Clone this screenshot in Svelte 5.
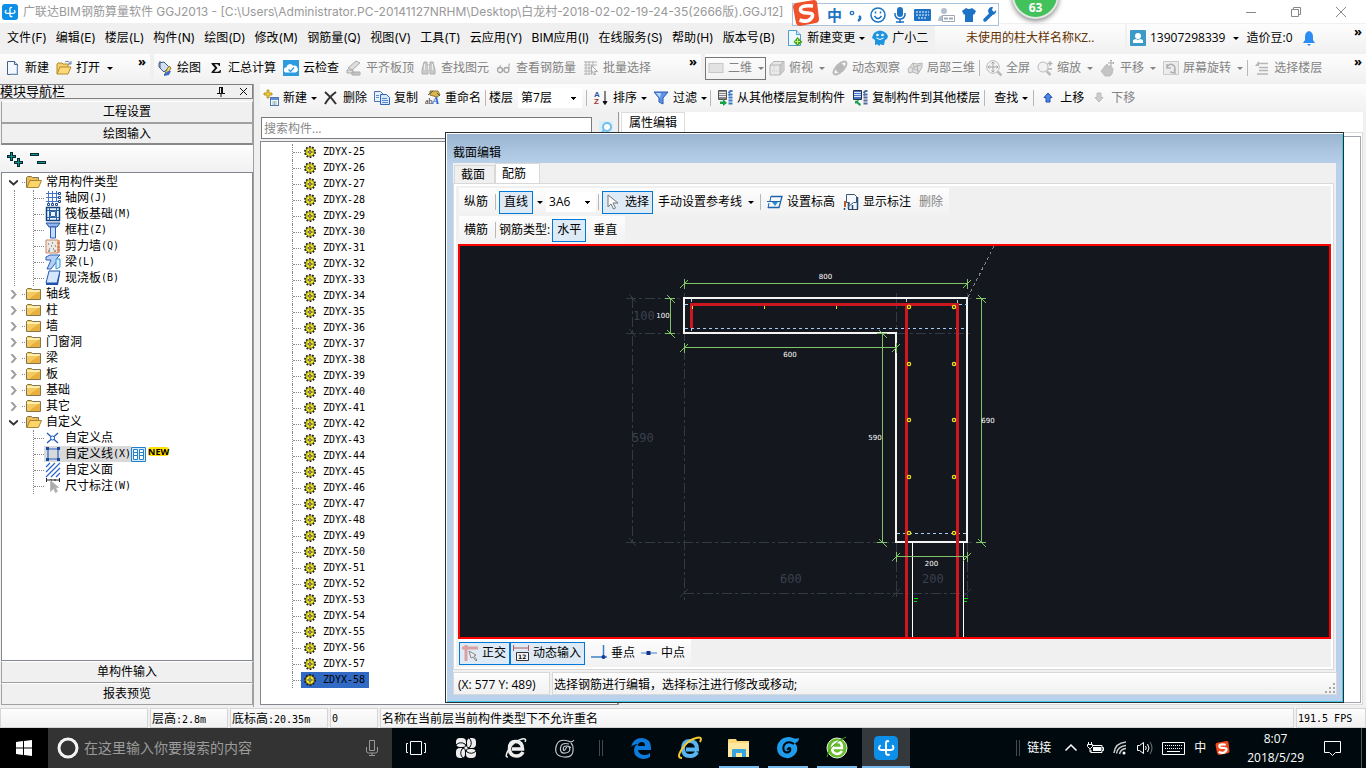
<script lang="ts">
  type Tool = { icon?: string; label: string; caret?: boolean; off?: boolean; sep?: boolean };

  const icons: Record<string, string> = {
    app: '<rect width="16" height="16" rx="3" fill="#0d8fe8"/><path d="M9.500 3.500Q8 3 8 5v6q0 2 2 1.500M4 6.500Q2 9 5 9.300h6q3-.3 1.500-2.800" fill="none" stroke="#fff" stroke-width="1.300" stroke-linecap="round"/>',
    page: '<path d="M2.500 1.500h7l3 3v10h-10z" fill="#f4f9ff" stroke="#44618c"/><path d="M9.500 1.500v3h3" fill="#cde" stroke="#44618c"/><path d="M12 6v8H5" fill="none" stroke="#9db8d8"/>',
    open: '<path d="M1 14V4l1-1h4l1 1h5v3" fill="#f5cf6b" stroke="#b58a2e"/><path d="M1 14l3-7h11l-3 7z" fill="#ffd978" stroke="#b58a2e"/><path d="M9 2q4-2 5 2M12 4h3V1" fill="none" stroke="#5a7da8"/>',
    bucket: '<path d="M2 3l5-1 5 5-5 5-5-5z" fill="#cfe0f4" stroke="#3e5f95"/><path d="M3 1v7" stroke="#556"/><path d="M12 6l2 2-3 5-3 1 1-3z" fill="#f2d66a" stroke="#8d7426"/><path d="M7 14q3-2 4-3l3 0-2 4-5 1z" fill="#3c6fc9"/>',
    sum: '<path d="M3.500 3h8.500v3h-1Q10.500 4.300 9 4.300H6.500L9.500 8 6 11.800H9.500q2 0 2.500-1.800h1L12.500 13H3.500v-1l3.500-4-3.500-4z" fill="#111"/>',
    cloud: '<rect width="16" height="16" fill="#2d9be0"/><path d="M3.500 12.500a2.600 2.600 0 010-5.200 3.500 3.500 0 016.500-1.500 3.500 3.500 0 012.500 6.700z" fill="#fff"/><path d="M5.500 9.500l2 2 3.500-4" fill="none" stroke="#2d9be0" stroke-width="1.300"/>',
    slab: '<path d="M2 8l8-7 4 2-8 7zM1 10h6v3H1zM6 12h8v3H6z" fill="#ddd" stroke="#aaa"/><path d="M8 12v3M10 12v3M12 12v3" stroke="#aaa"/>',
    binoc: '<path d="M3 2h3v3h3V2h3l2 8v4H9v-4H7v4H1v-4z" fill="#c9c9c9" stroke="#b0b0b0"/><path d="M7.500 5v5M3.500 4v6M11.500 4v6" stroke="#eee"/>',
    glasses: '<circle cx="4" cy="10" r="2.500" fill="none" stroke="#a5a5a5" stroke-width="1.300"/><circle cx="10.500" cy="10" r="2.500" fill="none" stroke="#a5a5a5" stroke-width="1.300"/><path d="M2 9l3-4M13 9V4h1M6.500 10h2" stroke="#a5a5a5" fill="none"/>',
    batch: '<path d="M1 2h13M1 5h13M1 8h8M1 11h8M1 14h8M3 1v14M6 1v14M10 1v6" stroke="#b5b5b5" fill="none"/><path d="M8.500 5.500l6 6-3 0 1 3-2 0-1-3-1 2z" fill="#f4f4f4" stroke="#aaa"/>',
    flat: '<rect x="1" y="3.500" width="14" height="9" fill="#e2e2e2" stroke="#c8c8c8"/>',
    cube: '<path d="M1 5l4-3.500h10V11l-4 4H1z" fill="#e9e9e9" stroke="#b5b5b5"/><path d="M11 5l4-3v9l-4 4z" fill="#ccc"/><path d="M1 5h10v10M11 5l4-3.500" fill="none" stroke="#b5b5b5"/><path d="M5 2v9H1M5 11h6" fill="none" stroke="#ccc" stroke-dasharray="1 1"/>',
    orbit: '<circle cx="8" cy="8" r="4.500" fill="#b8b8b8"/><ellipse cx="8" cy="8" rx="8.500" ry="3.500" transform="rotate(-45 8 8)" fill="none" stroke="#bbb" stroke-width="2"/>',
    local3d: '<path d="M1 9l5-6 4 1 5-1v4l-4 7-5-2-4 1z" fill="#e2e2e2" stroke="#b5b5b5"/><path d="M6 3l1 4 7-2M7 7l-2 5M10 5l1 8M3 7l9 4" fill="none" stroke="#b5b5b5"/>',
    full: '<circle cx="7" cy="7" r="6.300" fill="#f2f2f2" stroke="#bbb"/><path d="M7 2v10M2 7h10M5.500 3.500L7 2l1.500 1.500M5.500 10.500L7 12l1.500-1.500M3.500 5.500L2 7l1.500 1.500M10.500 5.500L12 7l-1.500 1.500" fill="none" stroke="#a5a5a5"/><path d="M11.500 11.500l4 4" stroke="#bbb" stroke-width="2.500"/>',
    zoom: '<circle cx="6" cy="7" r="5" fill="#f2f2f2" stroke="#bbb"/><path d="M9.500 11l4 4" stroke="#bbb" stroke-width="2.500"/><path d="M13 1v5M10.500 3.500h5M11 9h4" stroke="#b0b0b0" stroke-width="1.300"/>',
    pan: '<path d="M3 9l2-3 2-2 1 2 3 0 2 3-1 5-2 2H5l-4-5z" fill="#c4c4c4" stroke="#bbb"/><path d="M11 0v6M8 3h6M10 1l1-1 1 1M13 2l1 1-1 1" stroke="#aaa" fill="none"/>',
    rotate: '<path d="M.5 1.500h15v13H.500z" fill="#ececec" stroke="#cacaca"/><path d="M4 8a4 4 0 117 3M4 4v4h4M7 12l5 1v-5" fill="none" stroke="#b0b0b0" stroke-width="1.500"/>',
    floors: '<path d="M3 3.500h11M5 7.500h9M5 10.500h9M3 14h11" stroke="#b5b5b5" stroke-width="1.500"/><path d="M1 6l4-5v5z" fill="#b5b5b5"/>',
    newitem: '<path d="M4 0h2v3h3v2H6v3H4V5H1V3h3z" fill="#f6cf32" stroke="#a07c12" stroke-width=".7"/><rect x="7.500" y="7.500" width="8" height="8" fill="#f4f9ff" stroke="#5276ad"/><path d="M8 9h7" stroke="#5e92d8" stroke-width="2"/><path d="M9 12h5M9 14h5M11.500 11v4" stroke="#9bb"/>',
    cross: '<path d="M2 2q7 6 11 12M13 2Q6 7 2 14" fill="none" stroke="#333" stroke-width="2"/>',
    copy: '<path d="M.5 1.500h6l3 3v7h-9z" fill="#e8f1fc" stroke="#4a72b0"/><path d="M6.500 4.500h6l3 3v7h-9z" fill="#d8e8fb" stroke="#3465b5"/><path d="M8 8.500h5M8 10.500h6M8 12.500h6M2 5.500h3M2 7.500h3" stroke="#5e8bcd"/>',
    rename: '<path d="M5 1h8l2 4-3 2-7-2z" fill="#dcb64a" stroke="#8b7636"/><path d="M3 5l5-4M12 3l3 3" stroke="#555"/><text x="0" y="14" font-size="8" font-family="Liberation Serif" fill="#222">ab</text><text x="7" y="14" font-size="11" font-weight="700" font-style="italic" font-family="Liberation Serif" fill="#2b62c8">A</text>',
    sort: '<text x="1" y="7" font-size="8" font-weight="700" font-family="Liberation Sans" fill="#2f55a5">A</text><text x="1" y="14" font-size="8" font-weight="700" font-family="Liberation Sans" fill="#a03434">Z</text><path d="M12 1v13M10 11.500l2 3 2-3z" stroke="#111" fill="#111"/>',
    filter: '<path d="M1 2h14l-5 6v6l-4-2V8z" fill="#5d93e8" stroke="#2c5cb5"/><path d="M3 3h5l-1 5" fill="#b8d4fa"/>',
    fromfloor: '<path d="M1.500.500h8v9h-8z" fill="#888" stroke="#555"/><path d="M2 2.500h7M2 4.500h7M2 6.500h7" stroke="#eee"/><path d="M15.500 1h-2l-2 2M15.500 4.500h-3l-1 1M15.500 7.500h-4M15.500 10.500h-4M15.500 13.500h-4" stroke="#3a78c4" stroke-width="2" fill="none"/><path d="M3 11.500h3V9l4 4-4 3v-2H3z" fill="#18a048"/>',
    tofloor: '<path d="M1.500.500h8v9h-8z" fill="#4a72c8" stroke="#234"/><path d="M2 2.500h7M2 4.500h7M2 6.500h7" stroke="#dde8ff"/><path d="M15.500 1h-2l-2 2M15.500 4.500h-3l-1 1M15.500 7.500h-4M15.500 10.500h-4M15.500 13.500h-4" stroke="#4a6d9c" stroke-width="2" fill="none"/><path d="M3 11l4-1-1 2 3 2-1 2-4-3-1 1z" fill="#18a048"/>',
    up: '<path d="M8 3l4 4.500h-2v4.500h-4V7.500H4z" fill="#4d86e8" stroke="#2450a8"/>',
    down: '<path d="M8 12l4-4.500h-2V3h-4v4.500H4z" fill="#ccc" stroke="#bbb"/>',
    change: '<path d="M1.500.500h8l4 4v11h-12z" fill="#eef8ff" stroke="#4a9ed0"/><path d="M9.500.500v4h4" fill="#cfe9f8" stroke="#4a9ed0"/><path d="M10.500 7l5 5-5 4-4-4z" fill="#4da32a"/><path d="M10.500 9v5M8 11.500h5" stroke="#b8f070"/>',
    robot: '<path d="M2 3q6-5 12 0l2 3-1 3-2 1-1 5h-2l-1-1-2 2-2-2-1 1H3l0-5-3-2 1-3z" fill="#1f95e0"/><circle cx="5.500" cy="5" r="1.300" fill="#fff"/><circle cx="10.500" cy="5" r="1.300" fill="#fff"/><path d="M4.500 8q3.500 3 7 0" stroke="#fff" fill="none"/>',
    user: '<rect width="16" height="16" rx="1" fill="#3a9bc8"/><circle cx="8" cy="6" r="3" fill="#fff"/><path d="M3 13v-3l3-1 2 1 2-1 3 1v3z" fill="#fff"/>',
    bell: '<path d="M8 1q4 1 4 6v3l2 3H2l2-3V7q0-5 4-6z" fill="#2a8cf5"/><path d="M6 14h4l-2 2z" fill="#2a8cf5"/>',
    folder: '<path d="M.5 13.500v-10l1-1h4l1 1h8v10z" fill="#f4ca60" stroke="#86744a"/><path d="M1 4h13v2H1z" fill="#fff0b0"/><path d="M14 5v8H3z" fill="#df9f28" opacity=".6"/>',
    folderopen: '<path d="M.5 13.500v-10l1-1h4l1 1h6v3" fill="#e9bc55" stroke="#86744a"/><path d="M1 13.500l3-7h11.500l-3 7z" fill="#fbd56a" stroke="#a88434"/>',
    grid: '<path d="M3.500 1v13M7.500 1v13M11.500 1v11M1 3.500h12M1 7.500h12M1 11.500h12" stroke="#4674c8"/><path d="M13.500 2.500h2v2h-2zM13.500 6.500h2v2h-2zM13.500 10.500h2v2h-2zM2.500 13.500h2v2h-2zM6.500 13.500h2v2h-2zM10.500 13.500h2v2h-2z" fill="#fff" stroke="#1d4894"/>',
    raft: '<path d="M1.500 1.500h13v13h-13z" fill="#eef4ff" stroke="#14427e" stroke-width="1.500"/><path d="M5.500 5.500h5v5h-5zM4.500 2v12M11.500 2v12M2 4.500h12M2 11.500h12" fill="none" stroke="#2a64a4"/>',
    column: '<path d="M1 1h14l-3 4H4z" fill="#8fb4ee" stroke="#204f96"/><path d="M5.500 5h5v11h-5z" fill="#c6dbfb" stroke="#2a5db4"/>',
    wall: '<path d="M1 2h12v13H1z" fill="#ece8e4" stroke="#d0855c"/><path d="M3 6h1M6 8h1M4 11h1M8 11h1M3 13h2M9 13h2M7 5h1M10 8h1" stroke="#555"/><path d="M14 2v13M12 5h3M12 9h3M12 12h3" stroke="#d06a2c"/>',
    beam: '<path d="M1 3l4-2h10l-3 3v3L6 15H2l4-9H1z" fill="#b5d0f4" stroke="#2a62b5"/><path d="M11 5h4v8l-4 2z" fill="#dcebff" stroke="#2a9bd5"/>',
    cast: '<path d="M4 1h11l-3 12H1z" fill="#d5e6ff" stroke="#2457ac"/><path d="M1 13h11l3-12v3l-2 11H1z" fill="#1e52ae"/>',
    point: '<path d="M2 3l11 10M13 3L2 13" stroke="#2257a8" stroke-width="1.200"/><circle cx="7.500" cy="8" r="2" fill="#fff" stroke="#1d5fd0"/>',
    line: '<path d="M3 3h10v10H3z" fill="none" stroke="#2c64c8" stroke-width="1.200"/><path d="M1 1h3v3H1zM12 1h3v3h-3zM1 12h3v3H1zM12 12h3v3h-3z" fill="#184d9e"/>',
    area: '<path d="M1 5l4-4M1 10l9-9M1 15L15 1M6 15l9-9M11 15l4-4" stroke="#2c64c8" stroke-width="1.200"/>',
    measure: '<path d="M1.500 0v4M14.500 0v4M1 2h14M6 1v2M10 1v2" stroke="#222"/><path d="M5.500 2.500v11l3-3 2 4 2-1-2-4h3z" fill="#aaa" stroke="#bbb"/>',
    gear: '<circle cx="8" cy="8" r="5.800" fill="none" stroke="#1c1c08" stroke-width="2" stroke-dasharray="2 1.640"/><circle cx="8" cy="8" r="4.900" fill="#f6ea28" stroke="#4a4608" stroke-width=".8"/><path d="M8 4v2M8 10v2M4 8h2M10 8h2" stroke="#777010"/><circle cx="8" cy="8" r="1.500" fill="#fff" stroke="#222"/>',
    cursor: '<path d="M3 1v12l3-3 2.500 5 2-1L8 9h5z" fill="#fafafa" stroke="#777"/>',
    level: '<path d="M4 2.500h11l-3 11H1" fill="none" stroke="#1c65ac" stroke-width="1.300"/><path d="M0 7.500h13" stroke="#1c65ac"/><path d="M5 8h6l-3 4z" fill="#2b8ad8"/><path d="M4 2L3 7M2 9L1 14" stroke="#1c65ac"/>',
    note: '<path d="M1 7h2v6H1z" fill="#c3572c"/><path d="M1.500 14v2M5.500 15V8M14.500 15V3M9.500 15v-4" stroke="#1d4f8b" stroke-width="1.500"/><path d="M3.500.500h8l2 2v6h-3l-5 4 1-4h-3z" fill="#f5f9fd" stroke="#3a5676"/><path d="M5 15.500h10" stroke="#345"/>',
    ortho: '<path d="M0 3h16M4 0v16" stroke="#dca0a0" stroke-width="3"/><path d="M7 6l7 4-2 1 3 4-1 1-3-4-2 1z" fill="#eee" stroke="#888"/>',
    dyn: '<path d="M.5 0v6M15.500 0v6M0 3h16" stroke="#b25a5a"/><path d="M3.500 7.500h12v8h-12z" fill="#f4f4f4" stroke="#333"/><text x="5" y="14" font-size="6" font-weight="700" font-family="DejaVu Sans" fill="#111">12</text>',
    perp: '<path d="M0 12h16M12.500 0v12" stroke="#3d80c8" stroke-width="1.500"/><circle cx="12.500" cy="12" r="2" fill="#123c94"/>',
    mid: '<path d="M0 8h16" stroke="#3d80c8"/><path d="M5.500 6h4v4h-4z" fill="#12308c"/>'
  };

  const menus = [
    '文件(F)', '编辑(E)', '楼层(L)', '构件(N)', '绘图(D)', '修改(M)', '钢筋量(Q)', '视图(V)',
    '工具(T)', '云应用(Y)', 'BIM应用(I)', '在线服务(S)', '帮助(H)', '版本号(B)'
  ];

  const fileTools: Tool[] = [
    { icon: 'page', label: '新建' },
    { icon: 'open', label: '打开', caret: true }
  ];

  const drawTools: Tool[] = [
    { icon: 'bucket', label: '绘图' },
    { icon: 'sum', label: '汇总计算' },
    { icon: 'cloud', label: '云检查' },
    { icon: 'slab', label: '平齐板顶', off: true },
    { icon: 'binoc', label: '查找图元', off: true },
    { icon: 'glasses', label: '查看钢筋量', off: true },
    { icon: 'batch', label: '批量选择', off: true }
  ];

  const viewTools: Tool[] = [
    { icon: 'cube', label: '俯视', caret: true, off: true },
    { icon: 'orbit', label: '动态观察', off: true },
    { icon: 'local3d', label: '局部三维', off: true, sep: true },
    { icon: 'full', label: '全屏', off: true },
    { icon: 'zoom', label: '缩放', caret: true, off: true },
    { icon: 'pan', label: '平移', caret: true, off: true },
    { icon: 'rotate', label: '屏幕旋转', caret: true, off: true, sep: true },
    { icon: 'floors', label: '选择楼层', off: true }
  ];

  const editTools: Tool[] = [
    { icon: 'newitem', label: '新建', caret: true },
    { icon: 'cross', label: '删除' },
    { icon: 'copy', label: '复制' },
    { icon: 'rename', label: '重命名', sep: true }
  ];

  const listTools: Tool[] = [
    { icon: 'sort', label: '排序', caret: true },
    { icon: 'filter', label: '过滤', caret: true, sep: true },
    { icon: 'fromfloor', label: '从其他楼层复制构件' },
    { icon: 'tofloor', label: '复制构件到其他楼层', sep: true },
    { label: '查找', caret: true, sep: true },
    { icon: 'up', label: '上移' },
    { icon: 'down', label: '下移', off: true }
  ];

  const tree = [
    {
      label: '常用构件类型', open: true, items: [
        { icon: 'grid', label: '轴网', key: '(J)' },
        { icon: 'raft', label: '筏板基础', key: '(M)' },
        { icon: 'column', label: '框柱', key: '(Z)' },
        { icon: 'wall', label: '剪力墙', key: '(Q)' },
        { icon: 'beam', label: '梁', key: '(L)' },
        { icon: 'cast', label: '现浇板', key: '(B)' }
      ]
    },
    ...['轴线', '柱', '墙', '门窗洞', '梁', '板', '基础', '其它'].map((label) => ({ label, open: false, items: [] })),
    {
      label: '自定义', open: true, items: [
        { icon: 'point', label: '自定义点', key: '' },
        { icon: 'line', label: '自定义线', key: '(X)' },
        { icon: 'area', label: '自定义面', key: '' },
        { icon: 'measure', label: '尺寸标注', key: '(W)' }
      ]
    }
  ];

  const members = Array.from({ length: 34 }, (_, i) => `ZDYX-${i + 25}`);
  let selected = $state('ZDYX-58');
  let floor = $state('第7层');
  let rebar = $state('3A6');

  // section drawing, canvas pixels
  const hDims = [
    { x1: 224, x2: 507, y: 37, text: '800', ty: 33 },
    { x1: 224, x2: 436, y: 101, text: '600', ty: 111 },
    { x1: 436, x2: 507, y: 310, text: '200', ty: 320 }
  ];
  const vDims = [
    { x: 210, y1: 52, y2: 87, text: '100', tx: 203, ty: 72 },
    { x: 422, y1: 87, y2: 296, text: '590', tx: 415, ty: 194 },
    { x: 521, y1: 52, y2: 296, text: '690', tx: 528, ty: 177 }
  ];
  const bars = [61, 118, 174, 231, 287];
</script>

{#snippet icon(name: string)}
  <svg class="icon" viewBox="0 0 16 16" aria-hidden="true">{@html icons[name]}</svg>
{/snippet}

{#snippet tools(list: Tool[])}
  {#each list as t}
    <button class="tool" class:bare={!t.icon} disabled={t.off}>
      {#if t.icon}{@render icon(t.icon)}{/if}
      <span>{t.label}</span>
      {#if t.caret}<i class="caret"></i>{/if}
    </button>
    {#if t.sep}<span class="sep"></span>{/if}
  {/each}
{/snippet}

<div class="app">
  <header class="titlebar">
    {@render icon('app')}
    <h1>广联达BIM钢筋算量软件 GGJ2013 - [C:\Users\Administrator.PC-20141127NRHM\Desktop\白龙村-2018-02-02-19-24-35(2666版).GGJ12]</h1>
    <div class="win-buttons">
      <button aria-label="最小化"><svg width="12" height="12" viewBox="0 0 12 12"><path d="M1 6.500h10" /></svg></button>
      <button aria-label="还原"><svg width="12" height="12" viewBox="0 0 12 12"><path d="M1.500 3.500h7v7h-7zM3.500 3V1.500h7v7H9" /></svg></button>
      <button aria-label="关闭"><svg width="12" height="12" viewBox="0 0 12 12"><path d="M1 1l10 10M11 1L1 11" /></svg></button>
    </div>
  </header>

  <div class="ime">
    <svg class="sogou" width="28" height="28" viewBox="0 0 28 28"><path d="M4 4L22 1q2 0 3 2l2 17q0 3-3 4L8 27q-3 0-4-3L1 8q0-3 3-4z" fill="#f0502a" /><path d="M21 7Q9 6 8.500 10t7 4 4 5-12 2" fill="none" stroke="#fff" stroke-width="3.500" /></svg>
    <span>中</span>
    <svg width="14" height="16" viewBox="0 0 14 16"><circle cx="3" cy="6" r="1.700" fill="none" stroke="#1c72c4" stroke-width="1.300" /><path d="M10 9q3 2-1 5" fill="none" stroke="#1c72c4" stroke-width="2.500" /></svg>
    <svg width="16" height="16" viewBox="0 0 16 16"><circle cx="8" cy="8" r="7" fill="none" stroke="#1c72c4" stroke-width="1.500" /><path d="M4.500 9q3.500 5 7 0" fill="none" stroke="#1c72c4" stroke-width="1.500" /><path d="M5.500 4.500v2M10.500 4.500v2" stroke="#1c72c4" stroke-width="1.500" /></svg>
    <svg width="14" height="16" viewBox="0 0 14 16"><rect x="4" y="0" width="6" height="10" rx="3" fill="#1c72c4" /><path d="M2 6v2q1 4 5 4t5-4V6M7 12v4M3 15h8" fill="none" stroke="#1c72c4" stroke-width="1.500" /></svg>
    <svg width="17" height="12" viewBox="0 0 17 12"><rect width="17" height="12" rx="1" fill="#1c72c4" /><path d="M2 3h13M2 6h13M4 9h9" stroke="#fff" stroke-dasharray="2 1" /></svg>
    <svg width="17" height="16" viewBox="0 0 17 16"><circle cx="6" cy="4" r="3" fill="#b4bfcd" /><path d="M0 14q0-6 6-6t5 6z" fill="#b4bfcd" /><path d="M4.500 8.500h12v6h-12z" fill="#fff" stroke="#9da9b8" /><path d="M6 11.500h4M11 11.500h4" stroke="#9da9b8" stroke-width="2" /></svg>
    <svg width="14" height="14" viewBox="0 0 14 14"><path d="M4 0q3 2 6 0l4 3-2 4-1-1v8H3V6L2 7 0 3z" fill="#1c72c4" /></svg>
    <svg width="15" height="15" viewBox="0 0 15 15"><path d="M2 13l6-6" stroke="#1c72c4" stroke-width="3.500" stroke-linecap="round" /><path d="M13 3a4 4 0 11-3-3L9 3l2 2z" fill="#1c72c4" /></svg>
  </div>
  <div class="ball">63</div>

  <nav class="menubar">
    <div class="menus">
      {#each menus as m}<button>{m}</button>{/each}
    </div>
    {@render tools([{ icon: 'change', label: '新建变更', caret: true }, { icon: 'robot', label: '广小二' }])}
    <div class="group notice"><a href="#tip">未使用的柱大样名称KZ..</a></div>
    <div class="group account">
      {@render tools([{ icon: 'user', label: '13907298339', caret: true }])}
      <span class="beans">造价豆:0</span>
      {@render icon('bell')}
      <button class="more">»</button>
    </div>
  </nav>

  <div class="toolbar">
    <div class="group files">{@render tools(fileTools)}<button class="more">»</button></div>
    <div class="group draw">{@render tools(drawTools)}<button class="more">»</button></div>
    <div class="group views">
      <button class="tool mode" disabled>{@render icon('flat')}<span>二维</span><i class="caret"></i></button>
      {@render tools(viewTools)}
      <button class="more">»</button>
    </div>
  </div>

  <main>
    <aside>
      <div class="pane-title">
        <span>模块导航栏</span>
        <svg width="8" height="10" viewBox="0 0 8 10"><path d="M2.500 0v6M0 6.500h8M4 7v3M2 .5h4" stroke="#111" fill="none" /><path d="M5 0v6" stroke="#111" stroke-width="2" /></svg>
        <svg width="9" height="9" viewBox="0 0 9 9"><path d="M1 1l7 7M8 1L1 8" stroke="#111" /></svg>
      </div>
      <button class="pane-btn">工程设置</button>
      <button class="pane-btn active">绘图输入</button>
      <div class="tree-tools">
        <svg width="40" height="16" viewBox="0 0 40 16"><path d="M4.500 1v9M0 5.500h9M11.500 7v9M7 11.500h9M23 3.500h9M30 11.500h9" stroke="#032c2c" stroke-width="3" /><path d="M4.500 2v7M1 5.500h7M11.500 8v7M8 11.500h7M24 3.500h7M31 11.500h7" stroke="#109090" /></svg>
      </div>
      <div class="tree">
        {#each tree as node}
          <div class="node">
            <svg class="twist" class:open={node.open} width="9" height="9" viewBox="0 0 9 9"><path d="M2.500 0l4 4.500-4 4.500" /></svg>
            <i class="dots"></i>
            {@render icon(node.open ? 'folderopen' : 'folder')}
            <span>{node.label}</span>
          </div>
          {#if node.items.length}
            <div class="branch">
              <div class="kids">
                {#each node.items as item}
                  <div class="leaf">
                    <i class="dots"></i>
                    <span class="leaf-body" class:current={item.key === '(X)'}>
                      {@render icon(item.icon)}
                      <span class="leaf-label">{item.label}<span class="mono">{item.key}</span></span>
                    </span>
                    {#if item.key === '(X)'}
                      <svg width="15" height="15" viewBox="0 0 15 15"><path d="M.5.500h14v14H.500z" fill="#d6edff" stroke="#2380c8" /><path d="M2.500 2.500h4v10h-4zM8.500 2.500h4v10h-4z" fill="#fff" stroke="#2380c8" /><path d="M3 5.500h3M3 8.500h3M9 5.500h3M9 8.500h3" stroke="#2380c8" /></svg>
                      <b class="new">NEW</b>
                    {/if}
                  </div>
                {/each}
              </div>
            </div>
          {/if}
        {/each}
      </div>
      <button class="pane-btn">单构件输入</button>
      <button class="pane-btn">报表预览</button>
    </aside>

    <section class="work">
      <div class="group edit-bar">
        {@render tools(editTools)}
        <label for="floor">楼层</label>
        <select id="floor" class="combo" bind:value={floor}><option>第7层</option></select>
        <span class="sep"></span>
        {@render tools(listTools)}
      </div>
      <div class="split">
        <div class="members">
          <div class="search">
            <input type="text" aria-label="搜索构件" placeholder="搜索构件..." />
            <button aria-label="搜索"><svg width="14" height="14" viewBox="0 0 14 14"><rect width="14" height="14" fill="#d8eefb" /><circle cx="8" cy="6" r="4" fill="#fff" stroke="#6fbdec" stroke-width="2" /><path d="M5 9l-3 4" stroke="#6fbdec" stroke-width="2" /></svg></button>
          </div>
          <ul>
            {#each members as m}
              <li>
                <i class="dots"></i>
                <button class="member mono" class:selected={selected === m} onclick={() => (selected = m)}>
                  {@render icon('gear')}{m}
                </button>
              </li>
            {/each}
          </ul>
        </div>
        <div class="props">
          <button class="props-tab">属性编辑</button>
          <div class="props-page"><div></div></div>
        </div>
      </div>
    </section>
  </main>

  <div class="dialog" role="dialog" aria-label="截面编辑">
    <h2>截面编辑</h2>
    <div class="dialog-body">
      <div class="tabs">
        <button>截面</button>
        <button class="on">配筋</button>
      </div>
      <div class="page">
        <div class="group row">
          <button class="plain">纵筋</button>
          <span class="sep"></span>
          <button class="plain pressed">直线</button>
          <i class="caret"></i>
          <select class="combo small" aria-label="钢筋" bind:value={rebar}><option>3A6</option></select>
          <span class="sep"></span>
          <button class="tool pressed">{@render icon('cursor')}<span>选择</span></button>
          {@render tools([
            { label: '手动设置参考线', caret: true, sep: true },
            { icon: 'level', label: '设置标高' },
            { icon: 'note', label: '显示标注' },
            { label: '删除', off: true }
          ])}
        </div>
        <div class="group row">
          <button class="plain">横筋</button>
          <span class="sep"></span>
          <span>钢筋类型:</span>
          <button class="plain pressed">水平</button>
          <button class="plain">垂直</button>
        </div>

        <div class="canvas">
          <svg width="100%" height="100%">
            <g fill="none" stroke="#333a46" stroke-dasharray="10 3 3 3">
              <path d="M172.500 52v244M224.500 47v307M436.500 47v39M436.500 297v57M507.500 47v5M507.500 297v57" />
              <path d="M166 52.500h58M507 52.500h5M166 87.500h58M437 87.500h75M166 296.500h346M224 347.500h283" />
            </g>
            <g stroke="#333a46">
              {#each [52, 87, 296] as y}<path d="M169 {y - 4}l7 8" />{/each}
              {#each [224, 436, 507] as x}<path d="M{x - 4} 351l8 -8" />{/each}
            </g>
            <path d="M508 51L534 0" stroke="#888" stroke-dasharray="3 3" />
            <g class="ghost">
              <text x="173" y="74">100</text>
              <text x="172" y="196">590</text>
              <text x="320" y="337">600</text>
              <text x="462" y="337">200</text>
            </g>
            <path d="M224 52H507V296H436V87H224Z" fill="none" stroke="#f4f4f4" stroke-width="2" />
            <path d="M225 82.500h282M225 58.500h5M499 58.500h8M437 287.500h70M231.500 53v5M231.500 82v4M446.500 53v5M497.500 54v4" stroke="#a8cdf4" stroke-dasharray="3 3" fill="none" />
            <path d="M452.500 297v94M503.500 297v94" stroke="#fff" />
            <path d="M231.500 82V58.500H497.500V392M446.500 58V392" fill="none" stroke="#cc1720" stroke-width="3" />
            <g fill="#14171e" stroke="#f2dc1e" stroke-width="1.300">
              {#each bars as y}
                <circle cx="449" cy={y} r="1.600" />
                <circle cx="494" cy={y} r="1.600" />
              {/each}
            </g>
            <path d="M232.500 60v3M304.500 60v3M376.500 60v3" stroke="#f2dc1e" />
            <path d="M454 352.500h4M454 355.500h3M504 352.500h4M504 355.500h3" stroke="#00e000" />
            <g stroke="#7fc468">
              {#each hDims as d}
                <path d="M{d.x1} {d.y + 0.5}H{d.x2}M{d.x1 + 0.5} {d.y - 4}v10M{d.x2 + 0.5} {d.y - 4}v10M{d.x1 - 4} {d.y + 5}l8 -8M{d.x2 - 4} {d.y + 5}l8 -8" />
              {/each}
              {#each vDims as d}
                <path d="M{d.x + 0.5} {d.y1}V{d.y2}M{d.x - 5} {d.y1 + 0.5}h10M{d.x - 5} {d.y2 + 0.5}h10M{d.x - 3} {d.y1 - 3}l8 8M{d.x - 3} {d.y2 - 3}l8 8" />
              {/each}
            </g>
            <g class="dim">
              {#each hDims as d}<text x={(d.x1 + d.x2) / 2} y={d.ty}>{d.text}</text>{/each}
              {#each vDims as d}<text x={d.tx} y={d.ty}>{d.text}</text>{/each}
            </g>
          </svg>
        </div>

        <div class="group row snaps">
          <button class="tool pressed">{@render icon('ortho')}<span>正交</span></button>
          <button class="tool pressed">{@render icon('dyn')}<span>动态输入</span></button>
          <button class="tool first">{@render icon('perp')}<span>垂点</span></button>
          <button class="tool">{@render icon('mid')}<span>中点</span></button>
        </div>
      </div>
      <div class="dialog-status">
        <span class="coords">(X: 577 Y: 489)</span>
        <span class="hint">选择钢筋进行编辑，选择标注进行修改或移动;</span>
        <svg width="12" height="12" viewBox="0 0 12 12"><path d="M9 1h2M5 5h2M9 5h2M1 9h2M5 9h2M9 9h2" stroke="#aaa" stroke-width="2" /></svg>
      </div>
    </div>
  </div>

  <footer class="status">
    <span class="s-blank"></span>
    <span class="s-height">层高<span class="mono">:2.8m</span></span>
    <span class="s-base">底标高<span class="mono">:20.35m</span></span>
    <span class="s-count mono">0</span>
    <span class="s-msg">名称在当前层当前构件类型下不允许重名</span>
    <span class="s-fps mono">191.5 FPS</span>
  </footer>

  <div class="taskbar">
    <button class="start" aria-label="开始"><svg width="16" height="16" viewBox="0 0 16 16"><path d="M0 2l7-1v6.500H0zM8 1l8-1v7.500H8zM0 8.500h7V15l-7-1zM8 8.500h8V16l-8-1z" fill="#fff" /></svg></button>
    <div class="cortana">
      <svg width="22" height="22" viewBox="0 0 22 22"><circle cx="11" cy="11" r="9" fill="none" stroke="#f4f4f4" stroke-width="3" /></svg>
      <input type="text" aria-label="搜索" placeholder="在这里输入你要搜索的内容" />
      <svg width="12" height="18" viewBox="0 0 12 18"><path d="M3.500 1.500h5v10h-5zM.5 8v4q0 2 2 2h7q2 0 2-2V8M6 14v3M3 16.500h6" fill="none" stroke="#9a9a9a" /></svg>
    </div>
    <div class="apps">
      <button aria-label="任务视图"><svg width="22" height="16" viewBox="0 0 22 16"><path d="M5.500 1.500h11v13h-11zM3 3.500H1.500v9H3M19 3.500h1.500v9H19" fill="none" stroke="#fff" /></svg></button>
      <button class="wide" aria-label="四叶"><svg width="22" height="22" viewBox="0 0 22 22"><g fill="#eee"><rect x="1" y="1" width="10" height="9" rx="4" /><rect x="12" y="1" width="9" height="10" rx="4" /><rect x="11" y="12" width="10" height="9" rx="4" /><rect x="1" y="11" width="9" height="10" rx="4" /><circle cx="11" cy="11" r="2" /></g><path d="M1 8q4-4 9-1 1 1 1 3M14 1q4 4 1 9-1 1-3 1M21 14q-4 4-9 1-1-1-1-3M8 21q-4-4-1-9 1-1 3-1" fill="none" stroke="#000a0e" /></svg></button>
      <button class="wide" aria-label="浏览器"><svg width="22" height="22" viewBox="0 0 22 22"><path d="M18 15q-2 4-6.500 4-7 0-7-7.500T11 4.500t6.500 7.500H7" fill="none" stroke="#eee" stroke-width="3.500" /><path d="M3 20Q-1 20 4 12T17 2q5-1 3 3" fill="none" stroke="#eee" stroke-width="1.500" /></svg></button>
      <button aria-label="广联达"><svg width="20" height="20" viewBox="0 0 20 20"><path d="M19 2q-2 3-6 1Q3 0 1 9t8 10 9-9q0-3-2-5M14 6Q6 4 5.500 10t5 5 4-5-4 1q-1 2-2 1-1-4 3-4 4 0 4 2" fill="none" stroke="#c4c9cb" stroke-width="1.200" /></svg></button>
      <span class="bars"></span>
      <button aria-label="Edge"><svg width="22" height="22" viewBox="0 0 22 22"><path d="M1 10Q3 1 12 1q9 1 9 9v3H8q1 5 7 5 3 0 5-2v4q-3 2-7 2-9-1-9-9 0-4 4-6-6 1-7 3zM8 9h7q0-4-3-4-4 0-4 4z" fill="#0c7bdc" /></svg></button>
      <button aria-label="IE"><svg width="24" height="24" viewBox="0 0 24 24"><path d="M19 16q-2 4-7 4-7 0-7-7.500T12 5t7 8.500H8" fill="none" stroke="#58b4ee" stroke-width="4" /><path d="M4 22Q-2 22 4 13T18 2q7-2 4 4" fill="none" stroke="#f4c82e" stroke-width="2" /></svg></button>
      <button class="run" aria-label="资源管理器"><svg width="22" height="20" viewBox="0 0 22 20"><path d="M0 2q0-1 1-1h7l1 2h12v16H0z" fill="#fbd97a" /><path d="M0 5h21v14H0z" fill="#ffe8a0" /><path d="M4 12q0-1 1-1h12q1 0 1 1v7h-4v-4H8v4H4z" fill="#38a5dd" /></svg></button>
      <button class="run" aria-label="GGJ"><svg width="24" height="24" viewBox="0 0 24 24"><path d="M23 2q0 4-4 5 4 5 1 10-4 6-10 5Q1 20 1 12 2 2 12 1q3 0 5 1t6 0z" fill="#1f9cec" /><path d="M18 8q-4-3-8-1-4 3-2 8 3 3 6 0 1-3-1-3l-2 2" fill="none" stroke="#000a0e" stroke-width="2" /></svg></button>
      <button class="run" aria-label="360"><svg width="22" height="24" viewBox="0 0 22 24"><circle cx="11" cy="12" r="10" fill="#66bd2c" stroke="#e5f2d8" /><path d="M16 15q-2 3-5 3-5-1-5-6t5-6 5 6H7" fill="none" stroke="#fff" stroke-width="2.500" /><path d="M1 21Q3 9 20 1" fill="none" stroke="#3d9a18" /></svg></button>
      <button class="run now" aria-label="钢筋算量"><svg width="24" height="24" viewBox="0 0 16 16">{@html icons.app}</svg></button>
    </div>
    <div class="tray">
      <span class="bars"></span>
      <span class="links">链接</span>
      <svg width="14" height="10" viewBox="0 0 14 10"><path d="M1.500 7.500L7 2l5.500 5.500" fill="none" stroke="#fff" stroke-width="1.500" /></svg>
      <svg width="17" height="14" viewBox="0 0 17 14"><path d="M6 4.500h9v7H4V9M15 6.500h1.500v3H15M1.500 1v2M4.500 1v2M.5 3.500h5v2l-2 2h-1l-2-2zM3 7v4h1" fill="none" stroke="#fff" /><path d="M6 6h8v4H6z" fill="#fff" /></svg>
      <svg width="14" height="14" viewBox="0 0 14 14"><path d="M1 12Q2 2 13 1M3.500 12.500q1-7 9.500-8M6.500 13q1-5 6.500-5.500" fill="none" stroke="#ccc" stroke-width="1.500" /><circle cx="11" cy="12" r="1.500" fill="#fff" /></svg>
      <svg width="17" height="14" viewBox="0 0 17 14"><path d="M1.500 4.500h2l4-3v11l-4-3h-2z" fill="none" stroke="#fff" /><path d="M9.500 5q1.500 2 0 4M11.500 3q3 4 0 8" fill="none" stroke="#fff" /><path d="M14 1q4 6 0 12" fill="none" stroke="#777" /></svg>
      <svg width="23" height="13" viewBox="0 0 23 13"><path d="M.5.500h22v12H.500z" fill="none" stroke="#fff" /><path d="M3 3.500h17M3 6.500h17" stroke="#fff" stroke-dasharray="1 1" /><path d="M5 9.500h13" stroke="#fff" /></svg>
      <span>中</span>
      <svg width="15" height="16" viewBox="0 0 28 28"><path d="M4 4L22 1q2 0 3 2l2 17q0 3-3 4L8 27q-3 0-4-3L1 8q0-3 3-4z" fill="#f04a1c" /><path d="M20 8Q9 6 8 10t8 4 4 6-13 1" fill="none" stroke="#fff" stroke-width="4" /></svg>
      <time>8:07<br />2018/5/29</time>
      <svg class="bubble" width="17" height="17" viewBox="0 0 17 17"><path d="M.5 1.500h16v11h-5l-3 3-3-3h-5z" fill="none" stroke="#fff" /></svg>
      <span class="peek"></span>
    </div>
  </div>
</div>

<style>
  :global(body) {
    background: #f0f0f0;
  }

  .app {
    position: relative;
    display: flex;
    flex-direction: column;
    min-height: 100vh;
    overflow: hidden;
    background: #f0f0f0;
    color: #000;
    font: 12px/16px "Open Sans", "Noto Sans CJK SC", sans-serif;
    white-space: nowrap;
  }

  button,
  input,
  select {
    margin: 0;
    padding: 0;
    border: 0;
    border-radius: 0;
    background: none;
    color: inherit;
    font: inherit;
  }

  svg {
    flex: none;
    display: block;
  }

  .icon {
    width: 16px;
    height: 16px;
    overflow: visible;
  }

  .mono {
    font-family: "DejaVu Sans Mono", monospace;
    font-size: 10px;
  }

  .caret {
    flex: none;
    width: 0;
    border: 3px solid transparent;
    border-top-color: currentColor;
    border-bottom: 0;
  }

  .sep {
    flex: none;
    width: 1px;
    height: 16px;
    margin: 0 3px 0 0;
    background: #b8b8b8;
  }

  .group {
    display: flex;
    align-items: center;
    background: linear-gradient(#fdfdfd, #f1f1f1);
  }

  .tool {
    display: flex;
    align-items: center;
    gap: 4px;
    padding: 0 4px 0 3px;
    height: 24px;
  }

  .tool:disabled {
    color: #838383;
  }

  .more {
    align-self: flex-start;
    margin-left: auto;
    padding: 0 4px;
    font-size: 13px;
    line-height: 14px;
    font-weight: 700;
  }

  .combo {
    appearance: none;
    width: 64px;
    height: 20px;
    padding: 0 3px;
    background:
      linear-gradient(#000, #000) calc(100% - 6px) 9px / 5px 1px no-repeat,
      linear-gradient(#000, #000) calc(100% - 7px) 10px / 3px 1px no-repeat,
      linear-gradient(#000, #000) calc(100% - 8px) 11px / 1px 1px no-repeat,
      #fff;
  }

  .combo.small {
    width: 50px;
  }

  /* title bar */
  .titlebar {
    display: flex;
    align-items: center;
    height: 23px;
    padding-left: 2px;
    background: #fff;
  }

  h1 {
    flex: 1;
    margin: 0 0 0 5px;
    color: #999;
    font-family: Inter, "Noto Sans CJK SC", sans-serif;
    font-size: 12px;
    font-weight: 400;
  }

  .win-buttons {
    display: flex;
    margin-right: 3px;
  }

  .win-buttons button {
    width: 45px;
    height: 20px;
    display: grid;
    place-items: center;
  }

  .win-buttons svg {
    fill: none;
    stroke: #888;
  }

  .ime {
    position: absolute;
    left: 792px;
    top: 3px;
    display: flex;
    align-items: center;
    gap: 7px;
    height: 21px;
    border: 1px solid #a8c3dc;
    background: #fff;
    color: #1c72c4;
    font-size: 15px;
    font-weight: 700;
  }

  .sogou {
    margin: -3px 0 0 -1px;
  }

  .ball {
    position: absolute;
    left: 1012px;
    top: -29px;
    width: 43px;
    height: 15px;
    padding-top: 29px;
    border: 2px solid #e4e8e4;
    border-radius: 50%;
    background: #43c25c;
    box-shadow: 0 2px 5px #888;
    color: #fff;
    font-weight: 700;
    line-height: 12px;
    text-align: center;
  }

  /* menus and toolbars */
  .menubar,
  .toolbar {
    display: flex;
    align-items: center;
    height: 30px;
    padding-bottom: 1px;
  }

  .toolbar {
    height: 28px;
    padding-bottom: 2px;
  }

  .menus {
    display: flex;
    gap: 9px;
    padding: 0 9px 0 7px;
    font-family: Inter, "Noto Sans CJK SC", sans-serif;
  }

  .menubar .group {
    height: 29px;
  }

  .toolbar .group {
    height: 28px;
  }

  .notice {
    flex: 1 0 158px;
    justify-content: center;
    margin-left: 3px;
  }

  .notice a {
    color: #643200;
    text-decoration: none;
  }

  .account {
    flex: 0 0 239px;
    margin-left: 2px;
  }

  .account .caret {
    margin-left: 4px;
  }

  .beans {
    margin: 0 8px 0 3px;
  }

  .files {
    flex: 0 0 150px;
    padding-left: 2px;
    box-sizing: border-box;
  }

  .draw {
    flex: 0 0 547px;
    margin-left: 4px;
  }

  .views {
    flex: 1;
    margin-left: 4px;
  }

  .mode {
    padding: 0 1px 0 2px;
    height: 23px;
    border: 1px solid #777;
  }

  .views .sep {
    margin: 0 3px 0 0;
  }

  .views .tool .caret {
    margin: 0 0 0 2px;
  }

  .files .caret {
    margin: 0 0 0 3px;
  }

  /* body */
  main {
    flex: 1;
    display: flex;
    min-height: 0;
  }

  aside {
    flex: 0 0 254px;
    display: flex;
    flex-direction: column;
    margin-right: 6px;
    padding-bottom: 2px;
    border-right: 1px solid #a0a0a0;
    box-sizing: border-box;
  }

  .pane-title {
    display: flex;
    align-items: center;
    gap: 14px;
    height: 13px;
    margin: 0 0 2px;
    padding-right: 4px;
    border: 1px solid #808080;
    border-left: 0;
    font-size: 13px;
    line-height: 13px;
  }

  .pane-title span {
    flex: 1;
  }

  .pane-btn {
    height: 22px;
    margin-left: 1px;
    border: 1px solid #a0a0a0;
    border-top-color: #fff;
    background: #f0f0f0;
  }

  .pane-btn.active {
    border: 1px solid #a0a0a0;
    border-bottom: 2px solid #888;
  }

  .tree-tools {
    padding: 6px 0 5px 7px;
    background: linear-gradient(#fdfdfd, #f1f1f1);
  }

  .tree {
    flex: 1;
    margin-left: 1px;
    padding-top: 1px;
    border: 1px solid #828790;
    background: #fff;
  }

  .node,
  .leaf {
    display: flex;
    align-items: center;
    height: 16px;
  }

  .node {
    padding-left: 7px;
    gap: 4px;
  }

  .node .icon {
    margin-left: -3px;
  }

  .twist {
    fill: none;
    stroke: #a0a0a0;
    stroke-width: 2;
  }

  .twist.open {
    stroke: #333;
    transform: rotate(90deg);
  }

  .dots {
    flex: none;
    width: 10px;
    border-top: 1px dotted #888;
  }

  .node .dots {
    width: 3px;
  }

  .branch {
    margin-left: 12px;
    border-left: 1px dotted #888;
  }

  .branch:last-child {
    border-left-color: transparent;
  }

  .kids {
    margin-left: 18px;
    border-left: 1px dotted #888;
  }

  .leaf-body {
    display: flex;
    align-items: center;
    gap: 4px;
    padding-left: 1px;
  }

  .leaf-label {
    display: flex;
    height: 16px;
  }

  .current {
    background: #d9d9d9;
  }

  .new {
    margin: -6px 0 0 2px;
    background: #ffe000;
    border-radius: 3px;
    font-size: 9px;
    line-height: 9px;
  }

  .work {
    flex: 1;
    display: flex;
    flex-direction: column;
    min-width: 0;
  }

  .edit-bar {
    height: 28px;
  }

  .edit-bar label {
    margin-right: 5px;
  }

  .edit-bar .combo {
    margin-right: 4px;
  }

  .edit-bar .caret {
    margin-right: -1px;
  }

  .edit-bar .bare {
    padding: 0 6px;
  }

  .split {
    flex: 1;
    display: flex;
  }

  .members {
    flex: 0 0 358px;
    display: flex;
    flex-direction: column;
    border-right: 1px solid #999;
    margin-bottom: 2px;
  }

  .search {
    display: flex;
    gap: 7px;
    padding: 5px 5px 1px 1px;
  }

  .search input {
    flex: 1;
    height: 20px;
    padding-left: 2px;
    border: 1px solid #7a7a7a;
    background: #fff;
  }

  .search input::placeholder {
    color: #888;
    opacity: 1;
  }

  ul {
    flex: 1;
    margin: 1px 0 0;
    padding: 2px 0 0 31px;
    border: 1px solid #828790;
    background: #fff;
    list-style: none;
  }

  li {
    display: flex;
    align-items: center;
    height: 16px;
    border-left: 1px dotted #888;
  }

  li .dots {
    width: 8px;
  }

  .member {
    display: flex;
    align-items: center;
    gap: 5px;
    height: 16px;
    padding-right: 4px;
    padding-left: 1px;
  }

  .member .icon {
    width: 16px;
    height: 14px;
  }

  .member.selected {
    background: #316ac5;
  }

  .props {
    flex: 1;
    display: flex;
    flex-direction: column;
    margin: 0 3px 2px 1px;
    background: #fff;
  }

  .props-tab {
    align-self: flex-start;
    height: 20px;
    margin-left: 1px;
    padding: 0 7px;
    border: 1px solid #dcdcdc;
    border-bottom: 0;
  }

  .props-page {
    flex: 1;
    display: flex;
    padding: 3px 1px 1px;
    border: 1px solid #dcdcdc;
  }

  .props-page div {
    flex: 1;
    border: 1px solid #a0a4ac;
  }

  /* section editor */
  .dialog {
    position: absolute;
    left: 445px;
    right: 22px;
    top: 132px;
    bottom: 65px;
    display: flex;
    flex-direction: column;
    box-sizing: border-box;
    padding: 1px 7px 7px;
    border: 1px solid #2a2f33;
    box-shadow: inset 1px 1px #fff, inset -1px -1px #3fcbe4;
    background: linear-gradient(#99b4d1, #b9d1ea 32px);
  }

  h2 {
    margin: 0;
    padding: 11px 0 2px;
    font-size: 12px;
    font-weight: 400;
  }

  .dialog-body {
    flex: 1;
    display: flex;
    flex-direction: column;
    min-height: 0;
    background: #f0f0f0;
  }

  .tabs {
    display: flex;
    align-items: flex-end;
    height: 20px;
    padding-left: 1px;
  }

  .tabs button {
    height: 18px;
    padding: 0 9px 0 6px;
    border: 1px solid #d9d9d9;
    border-bottom: 0;
  }

  .tabs .on {
    height: 21px;
    margin-bottom: -1px;
    padding: 0 13px 0 6px;
    background: #fff;
  }

  .page {
    flex: 1;
    display: flex;
    flex-direction: column;
    align-items: flex-start;
    min-height: 0;
    margin-right: 2px;
    padding-left: 2px;
    border: 1px solid #d9d9d9;
    box-shadow: inset 0 0 0 2px #fff;
  }

  .row {
    gap: 2px;
    height: 28px;
    margin: 4px 0 0 3px;
    padding-right: 3px;
  }

  .row + .row {
    margin-top: 0;
  }

  .row .sep {
    margin: 0 1px 0 0;
  }

  .row .caret {
    margin: 0 1px 0 2px;
  }

  .plain {
    height: 23px;
    padding: 0 5px;
  }

  .row .tool {
    height: 23px;
    padding: 0 3px;
  }

  .row .pressed {
    padding: 0 4px;
    border: 1px solid #0078d7;
    background: #deebf6;
  }

  .row .tool.pressed {
    padding: 0 3px 0 2px;
  }

  .canvas {
    flex: 1;
    align-self: stretch;
    min-height: 0;
    margin: 0 2px 0 2px;
    border: 2px solid #f00;
    background: #14171e;
  }

  .canvas svg {
    overflow: hidden;
  }

  .canvas path {
    shape-rendering: crispEdges;
  }

  .ghost text {
    fill: #3a414d;
    font: 12px "DejaVu Sans Mono", monospace;
  }

  .dim text {
    fill: #fff;
    font: 7px "DejaVu Sans", sans-serif;
    text-anchor: middle;
  }

  .snaps {
    gap: 0;
    margin: 0 0 2px 3px;
  }

  .snaps .first {
    margin-left: 3px;
  }

  .dialog-status {
    display: flex;
    gap: 2px;
    height: 23px;
    margin-top: 2px;
    line-height: 23px;
  }

  .dialog-status span {
    border: 1px solid #d9d9d9;
    background: linear-gradient(#fdfdfd, #f1f1f1);
  }

  .coords {
    flex: 0 0 91px;
    padding-left: 4px;
  }

  .hint {
    flex: 1;
    padding-left: 1px;
  }

  .dialog-status svg {
    align-self: flex-end;
    margin-left: -15px;
    z-index: 1;
  }

  /* status bar */
  .status {
    display: flex;
    gap: 2px;
    height: 20px;
    padding-top: 1px;
    line-height: 19px;
  }

  .status > span {
    box-sizing: border-box;
    padding-left: 1px;
    border: 1px solid #d5d5d5;
    background: linear-gradient(#fdfdfd, #f1f1f1);
  }

  .s-blank {
    flex: 0 0 148px;
  }

  .s-height {
    flex: 0 0 78px;
  }

  .s-base {
    flex: 0 0 98px;
  }

  .s-count {
    flex: 0 0 48px;
  }

  .s-msg {
    flex: 1;
  }

  .s-fps {
    flex: 0 0 70px;
  }

  /* taskbar */
  .taskbar {
    display: flex;
    height: 40px;
    background: #000a0e;
    color: #fff;
  }

  .start {
    flex: 0 0 48px;
    display: grid;
    place-items: center;
    background: #000;
  }

  .cortana {
    flex: 0 0 344px;
    display: flex;
    align-items: center;
    box-sizing: border-box;
    padding: 0 14px 0 9px;
    background: #333;
  }

  .cortana input {
    flex: 1;
    min-width: 0;
    padding-left: 5px;
    font-size: 14px;
  }

  .cortana input::placeholder {
    color: #9b9b9b;
    opacity: 1;
  }

  .apps {
    display: flex;
    align-items: center;
    gap: 1px;
  }

  .apps button {
    width: 48px;
    height: 40px;
    display: grid;
    place-items: center;
    border-bottom: 2px solid transparent;
    border-top: 2px solid transparent;
    box-sizing: border-box;
  }

  .apps .wide {
    margin-left: 1px;
  }

  .apps .run {
    background: linear-gradient(#76b9ed, #76b9ed) center bottom / 40px 2px no-repeat border-box;
  }

  .apps .now {
    background: linear-gradient(#76b9ed, #76b9ed) center bottom / 48px 2px no-repeat border-box, #33393c;
  }

  .bars {
    width: 2px;
    height: 16px;
    border: 1px solid #444a4d;
    border-width: 0 1px;
  }

  .apps .bars {
    margin: 0 13px 0 9px;
  }

  .tray {
    display: flex;
    align-items: center;
    gap: 9px;
    margin-left: auto;
    height: 40px;
  }

  .links {
    margin: 0 4px 0 -2px;
  }

  time {
    margin-left: 8px;
    line-height: 19px;
    text-align: center;
  }

  .bubble {
    margin: 0 11px 0 11px;
  }

  .peek {
    width: 4px;
    height: 40px;
    border-left: 1px solid #555;
  }
</style>
